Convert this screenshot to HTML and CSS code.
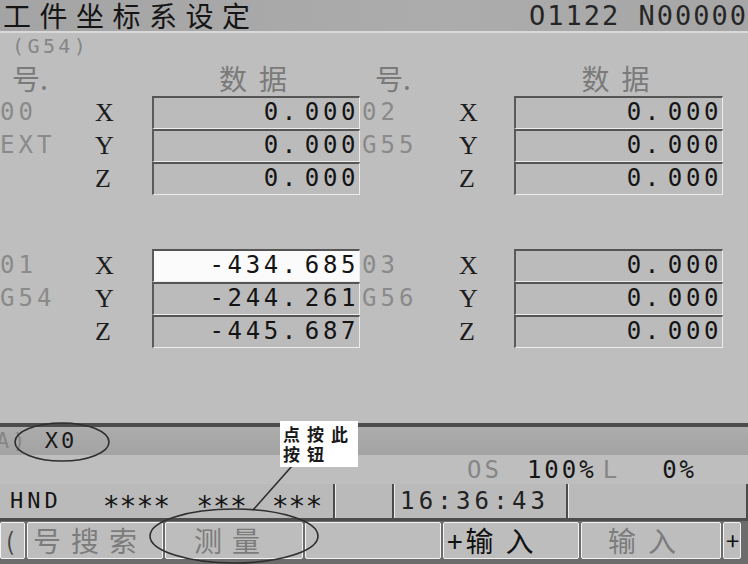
FILE: index.html
```html
<!DOCTYPE html>
<html lang="zh-CN">
<head>
    <meta charset="UTF-8">
    <title>工件坐标系设定</title>
    <link rel="stylesheet" href="styles.css">
</head>
<body>
    <div class="screen">
        <header class="titlebar">
            <h1>工件坐标系设定</h1>
            <span class="prog">O1122 N00000</span>
        </header>

        <div class="coord">(G54)</div>

        <div class="table heads">
            <div class="h-no">号.</div>
            <div></div>
            <div class="h-data">数据</div>
            <div class="h-no right">号.</div>
            <div></div>
            <div class="h-data">数据</div>
        </div>

        <!-- 00 EXT / 02 G55 -->
        <div class="table">
            <div class="tag">00</div>
            <div class="axis">X</div>
            <div class="val">0. 000</div>
            <div class="tag right">02</div>
            <div class="axis">X</div>
            <div class="val">0. 000</div>

            <div class="tag">EXT</div>
            <div class="axis">Y</div>
            <div class="val">0. 000</div>
            <div class="tag right">G55</div>
            <div class="axis">Y</div>
            <div class="val">0. 000</div>

            <div class="tag"></div>
            <div class="axis">Z</div>
            <div class="val">0. 000</div>
            <div class="tag right"></div>
            <div class="axis">Z</div>
            <div class="val">0. 000</div>
        </div>

        <!-- 01 G54 / 03 G56 -->
        <div class="table group2">
            <div class="tag">01</div>
            <div class="axis">X</div>
            <div class="val on">-434. 685</div>
            <div class="tag right">03</div>
            <div class="axis">X</div>
            <div class="val">0. 000</div>

            <div class="tag">G54</div>
            <div class="axis">Y</div>
            <div class="val">-244. 261</div>
            <div class="tag right">G56</div>
            <div class="axis">Y</div>
            <div class="val">0. 000</div>

            <div class="tag"></div>
            <div class="axis">Z</div>
            <div class="val">-445. 687</div>
            <div class="tag right"></div>
            <div class="axis">Z</div>
            <div class="val">0. 000</div>
        </div>

        <div class="spacer"></div>

        <div class="keyin"><span class="dim">A)</span> X0</div>

        <div class="rates">
            <span class="dim">OS</span>
            <span class="r-feed">100%</span>
            <span class="dim r-l">L</span>
            <span class="r-load">0%</span>
        </div>

        <div class="status">
            <div class="cell c1">
                <span>HND</span>
                <span class="stars s1">****</span>
                <span class="stars s2">***</span>
                <span class="stars s3">***</span>
            </div>
            <div class="cell c2"></div>
            <div class="cell c3">16:36:43</div>
            <div class="cell c4"></div>
        </div>

        <div class="softkeys">
            <div class="key k0">(</div>
            <div class="key k1 grey">号搜索</div>
            <div class="key k2 grey">测量</div>
            <div class="key k3"></div>
            <div class="key k4"><span class="plus">+</span>输入</div>
            <div class="key k5 grey">输入</div>
            <div class="key k6">+</div>
        </div>

        <!-- annotation drawn over the screen -->
        <svg class="marks" width="748" height="564" viewBox="0 0 748 564">
            <ellipse cx="62" cy="442" rx="47" ry="19" />
            <ellipse cx="234" cy="536" rx="84" ry="27" />
            <line x1="292" y1="466" x2="253" y2="510" />
        </svg>
        <div class="note">点按此<br>按钮</div>
    </div>
</body>
</html>
```

FILE: styles.css
```css
:root {
    --screen-bg: #bebebe;
    --dark-line: #4c4c4c;
    --light-line: #ececec;
    --dim-text: #868686;
    --mono: "DejaVu Sans Mono", "Liberation Mono", monospace;
    --cjk: "Noto Sans CJK SC", "Noto Sans", sans-serif;
}

* {
    margin: 0;
    padding: 0;
    box-sizing: border-box;
}

body {
    width: 748px;
    height: 564px;
    overflow: hidden;
    background: var(--screen-bg);
    font-family: var(--mono);
}

.screen {
    position: relative;
    width: 748px;
    height: 564px;
    display: flex;
    flex-direction: column;
    background: var(--screen-bg);
    overflow: hidden;
}

/* title bar */
.titlebar {
    height: 33px;
    display: flex;
    justify-content: space-between;
    align-items: center;
    padding-left: 3px;
    background: linear-gradient(90deg, #a4a4a4, #acacac 60%, #a6a6a6);
    border-bottom: 2px solid #d9d9d9;
}

.titlebar h1 {
    font-family: var(--cjk);
    font-weight: normal;
    font-size: 28px;
    letter-spacing: 8.5px;
    line-height: 29px;
    color: #151515;
}

.prog {
    font-size: 27px;
    letter-spacing: 2px;
    line-height: 31px;
    color: #262626;
}

.coord {
    height: 27px;
    padding-left: 12px;
    font-size: 20px;
    letter-spacing: 3.4px;
    line-height: 27px;
    color: var(--dim-text);
}

/* offset table */
.table {
    display: grid;
    grid-template-columns: 95px 57px 208px 99px 55px 209px;
    grid-auto-rows: 33px;
}

.table.heads {
    grid-auto-rows: 36px;
}

.table.group2 {
    margin-top: 54px;
}

.h-no,
.h-data {
    font-family: var(--cjk);
    font-size: 28px;
    line-height: 36px;
    color: #7a7a7a;
}

.h-no {
    padding-left: 12px;
}

.h-no.right {
    padding-left: 15px;
}

.h-data {
    text-align: center;
    letter-spacing: 12px;
    padding-left: 6px;
}

.tag {
    font-size: 24px;
    letter-spacing: 4px;
    line-height: 33px;
    color: #8a8a8a;
}

.tag.right {
    padding-left: 2px;
}

.axis {
    font-family: "Liberation Serif", serif;
    font-size: 26px;
    line-height: 33px;
    color: #1c1c1c;
}

.val {
    border-top: 2px solid #555;
    border-left: 2px solid #5a5a5a;
    border-bottom: 1px solid var(--light-line);
    border-right: 1px solid var(--light-line);
    background: #bbbbbb;
    text-align: right;
    font-size: 24px;
    letter-spacing: 3.6px;
    word-spacing: -13px;
    line-height: 29px;
    color: #141414;
    white-space: nowrap;
}

.val.on {
    background: #fbfbfb;
}

.spacer {
    flex: 1;
}

/* key-in line and status */
.keyin {
    height: 32px;
    border-top: 4px solid var(--dark-line);
    background: linear-gradient(#acacac, #a3a3a3);
    margin-left: -4px;
    font-size: 22px;
    letter-spacing: 3px;
    line-height: 28px;
    color: #1a1a1a;
    white-space: pre;
}

.dim {
    color: var(--dim-text);
}

.rates {
    height: 29px;
    display: flex;
    align-items: center;
    padding-left: 467px;
    font-size: 24px;
    letter-spacing: 3px;
    color: #161616;
}

.r-feed {
    margin-left: 25px;
}

.r-l {
    margin-left: 6px;
}

.r-load {
    margin-left: 42px;
}

.status {
    height: 37px;
    display: flex;
    border-bottom: 3px solid var(--dark-line);
    background: #bababa;
}

.cell {
    height: 34px;
    border-right: 2px solid var(--dark-line);
    box-shadow: inset 1px 0 0 var(--light-line);
    font-size: 22px;
    letter-spacing: 4px;
    line-height: 34px;
    color: #151515;
    white-space: nowrap;
}

.c1 {
    width: 335px;
    display: flex;
    align-items: center;
    padding-left: 10px;
    box-shadow: none;
}

.stars {
    font-size: 28px;
    letter-spacing: 0;
    line-height: 28px;
    padding-top: 12px;
}

.s1 { margin-left: 41px; }
.s2 { margin-left: 26px; }
.s3 { margin-left: 25px; }

.c2 { width: 59px; }

.c3 {
    width: 174px;
    padding-left: 6px;
    font-size: 24px;
    letter-spacing: 4.2px;
    color: #222;
}

.c4 { width: 180px; }

/* soft keys */
.softkeys {
    height: 43px;
    display: flex;
    gap: 2px;
    padding: 1px 0 5px;
    background: #6c6c6c;
}

.key {
    border: 1px solid #f3f3f3;
    border-radius: 2px;
    background: #bdbdbd;
    font-family: var(--cjk);
    font-size: 28px;
    letter-spacing: 10px;
    line-height: 34px;
    color: #111;
    white-space: nowrap;
    overflow: hidden;
}

.key.grey {
    color: #7c7c7c;
}

.plus {
    letter-spacing: 3px;
}

.k0 { width: 25px; padding-left: 5px; color: #444; font-size: 24px; }
.k1 { width: 136px; padding-left: 5px; }
.k2 { width: 138px; padding-left: 28px; }
.k3 { width: 136px; }
.k4 { width: 136px; padding-left: 3px; letter-spacing: 12px; }
.k5 { width: 140px; padding-left: 26px; letter-spacing: 12px; }
.k6 { width: 18px; padding-left: 2px; font-size: 24px; letter-spacing: 0; }

/* annotation overlay */
.marks {
    position: absolute;
    left: 0;
    top: 0;
    pointer-events: none;
}

.marks ellipse,
.marks line {
    fill: none;
    stroke: #2e2e2e;
    stroke-width: 1.6;
}

.note {
    position: absolute;
    left: 280px;
    top: 421px;
    width: 78px;
    height: 46px;
    padding: 3px 0 0 3px;
    background: #fff;
    font-family: var(--cjk);
    font-weight: bold;
    font-size: 17px;
    letter-spacing: 7px;
    line-height: 20px;
    color: #1a1a1a;
    white-space: nowrap;
}
```
